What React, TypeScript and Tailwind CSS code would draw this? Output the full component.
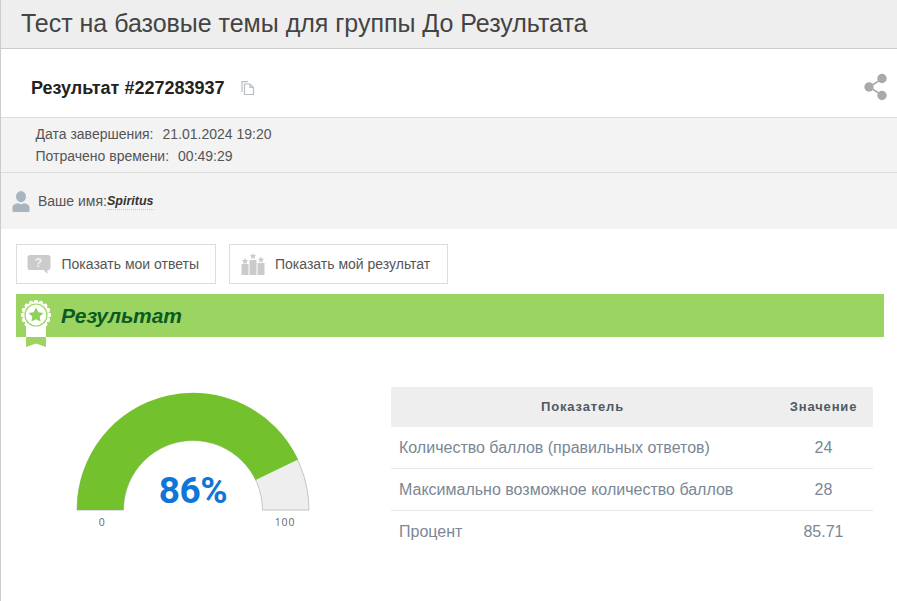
const rows = [
  { label: 'Количество баллов (правильных ответов)', value: '24', height: 'h-[41px]' },
  { label: 'Максимально возможное количество баллов', value: '28', height: 'h-[42px]' },
  { label: 'Процент', value: '85.71', height: 'h-[42px]' },
]

function CopyIcon() {
  return (
    <svg width="14" height="14" viewBox="0 0 14 14" fill="none" stroke="#b4bfc8" strokeWidth="1.2">
      <path d="M1 11V.6h6" />
      <path d="M3.500 3h5.500l3.500 3.500v7h-9z" fill="#fff" />
      <path d="M9 3v3.500h3.500" />
    </svg>
  )
}

function ShareIcon() {
  return (
    <svg width="24" height="28" viewBox="0 0 24 28" fill="#a9a9a9">
      <path d="M5 14L18 6M5 14l13 8" stroke="#a9a9a9" strokeWidth="1.5" />
      <circle cx="5" cy="14" r="4.700" />
      <circle cx="18" cy="5.500" r="4.700" />
      <circle cx="18" cy="22.500" r="4.700" />
    </svg>
  )
}

function UserIcon() {
  return (
    <svg width="18" height="21" viewBox="0 0 18 21" fill="#a6b5c0">
      <ellipse cx="9" cy="5.600" rx="5" ry="5.600" />
      <path d="M0.500 20.500v-4.200c0-2.400 2.800-3.600 5.400-4 1.900 1.100 4.300 1.100 6.200 0 2.600.4 5.400 1.600 5.400 4v4.200c-.5.3-1 .5-1.500.5H2c-.5 0-1-.2-1.500-.5z" />
    </svg>
  )
}

function QuestionIcon() {
  return (
    <svg width="24" height="19" viewBox="0 0 24 19">
      <path d="M3 0h18a2.500 2.500 0 0 1 2.500 2.500v10a2.500 2.500 0 0 1-2.500 2.500h-.5v4l-4-4H3a2.500 2.500 0 0 1-2.500-2.500v-10A2.500 2.500 0 0 1 3 0z" fill="#cbcbcb" />
      <text x="11.500" y="12" textAnchor="middle" fontSize="12" fontWeight="700" fill="#f2f2f2" fontFamily="Liberation Sans, sans-serif">?</text>
    </svg>
  )
}

function PodiumIcon() {
  return (
    <svg width="24" height="22" viewBox="0 0 24 22" fill="#cbcbcb">
      <rect x="0.500" y="11" width="7" height="11" />
      <rect x="8.500" y="7" width="7" height="15" />
      <rect x="16.500" y="10" width="7" height="12" />
      <path d="M4 5l1 2 2.200.3-1.600 1.500.4 2.200L4 10l-2 1 .4-2.200L.8 7.300 3 7z" />
      <path d="M12 0l1 2 2.200.3-1.600 1.500.4 2.200-2-1-2 1 .4-2.200-1.600-1.500L11 2z" />
      <path d="M20 3.500l1 2 2.200.3-1.600 1.500.4 2.200-2-1-2 1 .4-2.200-1.600-1.500L19 5.500z" />
    </svg>
  )
}

function BadgeIcon() {
  const scallops = Array.from({ length: 16 }, (_, i) => {
    const a = (i * Math.PI * 2) / 16
    return { x: 15 + Math.cos(a) * 13, y: 15 + Math.sin(a) * 13 }
  })
  return (
    <svg width="30" height="48" viewBox="0 0 30 48">
      <path d="M5 37h20v10l-10-3.500L5 47z" fill="#9bd461" />
      <rect x="5" y="26" width="20" height="11" fill="#fff" />
      {scallops.map((s, i) => (
        <circle key={i} cx={s.x} cy={s.y} r="2.200" fill="#fff" />
      ))}
      <circle cx="15" cy="15" r="13" fill="#fff" />
      <circle cx="15" cy="15" r="11" fill="none" stroke="#9bd461" strokeWidth="1.200" />
      <path d="M15 7.500l2.300 4.700 5.200.7-3.800 3.600.9 5.100-4.600-2.400-4.600 2.400.9-5.100-3.800-3.600 5.200-.7z" fill="#8fd05a" />
    </svg>
  )
}

function Gauge() {
  return (
    <svg width="300" height="150" viewBox="0 0 300 150" className="block">
      <path d="M4 123a116 116 0 0 1 232 0h-46.500a69.500 69.500 0 0 0-139 0z" fill="#eeeeee" stroke="#c4c4c4" strokeWidth="1" />
      <path d="M4 123A116 116 0 0 1 225 72.500L182.600 92.900A69.500 69.500 0 0 0 50.500 123z" fill="#74c12e" />
      <text x="120" y="115.500" textAnchor="middle" fontSize="37" fontWeight="700" letterSpacing="-0.5" fill="#0f75d8" fontFamily="Roboto, sans-serif">86%</text>
      <text x="29" y="138.500" textAnchor="middle" fontSize="10.500" letterSpacing="0.5" fill="#666" fontFamily="Open Sans, sans-serif">0</text>
      <text x="212" y="138.500" textAnchor="middle" fontSize="10.500" letterSpacing="0.8" fill="#666" fontFamily="Open Sans, sans-serif">100</text>
    </svg>
  )
}

export default function App() {
  return (
    <div className="w-[897px] h-[601px] overflow-hidden border-l border-[#cccccc] bg-white font-['Liberation_Sans',Arial,sans-serif]">
      <div className="h-[49px] bg-[#eeeeee] border-b border-[#cccccc] pl-5 flex items-center">
        <h1 className="text-[25px] leading-none text-[#444444] pb-[1px] tracking-[-0.02px]">Тест на базовые темы для группы До Результата</h1>
      </div>

      <div className="h-[69px] flex items-center justify-between pl-[30px] pr-[9px] pt-[8px] border-b border-[#dddddd]">
        <div className="flex items-center gap-[16px] pt-[2px]">
          <span className="text-[18px] font-bold text-[#222222]">Результат #227283937</span>
          <CopyIcon />
        </div>
        <ShareIcon />
      </div>

      <div className="h-[55px] bg-[#f3f3f3] border-b border-[#dddddd] pl-[34.500px] pt-[5px] text-[14px] text-[#555555]">
        <div className="h-[22px] leading-[22px] flex gap-[9px]">
          <span>Дата завершения:</span>
          <span>21.01.2024 19:20</span>
        </div>
        <div className="h-[22px] leading-[22px] flex gap-[9px]">
          <span>Потрачено времени:</span>
          <span>00:49:29</span>
        </div>
      </div>

      <div className="h-[56px] bg-[#f3f3f3] pl-[11px] flex items-center gap-[8px] text-[14px] text-[#555555]">
        <UserIcon />
        <span className="flex items-center">
          Ваше имя:
          <span className="font-bold italic text-[12.500px] text-[#333333] border-b border-dotted border-[#b9cbdb] leading-[16px]">Spiritus</span>
        </span>
      </div>

      <div className="pl-[15px] pt-[15px] flex gap-[13px] text-[14px] text-[#555555]">
        <div className="w-[200px] h-[40px] border border-[#dddddd] flex items-center pl-[10px] gap-[10.500px]">
          <QuestionIcon />
          <span>Показать мои ответы</span>
        </div>
        <div className="w-[219px] h-[40px] border border-[#dddddd] flex items-center pl-[11px] gap-[10px]">
          <PodiumIcon />
          <span>Показать мой результат</span>
        </div>
      </div>

      <div className="relative ml-[15px] mt-[10px] w-[868px] h-[43px] bg-[#9bd461] flex items-center pl-[45px]">
        <div className="absolute left-[5px] top-[6px]">
          <BadgeIcon />
        </div>
        <h2 className="text-[21px] font-bold italic text-[#0b5a24] pt-[1px]">Результат</h2>
      </div>

      <div className="flex mt-[50px] pl-[72px]">
        <div className="w-[318px] shrink-0">
          <Gauge />
        </div>
        <table className="w-[482px] h-fit border-collapse text-[16px] text-[#7b8794] table-fixed">
          <thead>
            <tr className="h-[40px] bg-[#eeeeee] text-[13px] font-bold text-[#505a64] tracking-[0.85px]">
              <th className="w-[383px] font-bold text-center">Показатель</th>
              <th className="font-bold text-center">Значение</th>
            </tr>
          </thead>
          <tbody>
            {rows.map((row, i) => (
              <tr key={row.label} className={`${row.height} ${i < rows.length - 1 ? 'border-b border-[#e6eaeb]' : ''}`}>
                <td className="pl-2 pt-[1px]">{row.label}</td>
                <td className="text-center pt-[1px]">{row.value}</td>
              </tr>
            ))}
          </tbody>
        </table>
      </div>
    </div>
  )
}
